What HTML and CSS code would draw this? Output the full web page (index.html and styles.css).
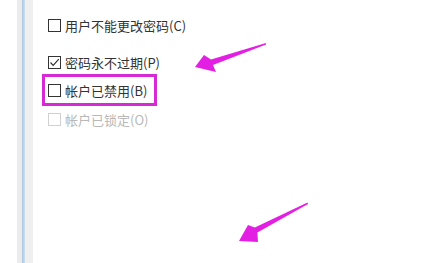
FILE: index.html
```html
<!DOCTYPE html>
<html lang="zh-CN">
<head>
    <meta charset="UTF-8">
    <link rel="stylesheet" href="styles.css">
</head>
<body>
    <div class="page">
        <div class="frame">
            <div class="frame-gray"></div>
            <div class="frame-blue"></div>
            <div class="frame-light"></div>
        </div>
        <div class="options">
            <label class="option first">
                <span class="box"></span>
                <span>用户不能更改密码(C)</span>
            </label>
            <label class="option second">
                <span class="box">
                    <svg width="11" height="11" viewBox="0 0 11 11"><path d="M1.5 5.5 L4.2 8.3 L9.8 2.2" fill="none" stroke="#333" stroke-width="1.2"/></svg>
                </span>
                <span>密码永不过期(P)</span>
            </label>
            <div class="highlight">
                <label class="option">
                    <span class="box"></span>
                    <span>帐户已禁用(B)</span>
                </label>
            </div>
            <label class="option disabled">
                <span class="box"></span>
                <span>帐户已锁定(O)</span>
            </label>
        </div>
        <!-- arrows drawn over the screenshot -->
        <svg class="arrows" width="433" height="263" viewBox="0 0 433 263">
            <polygon points="266,43 211,59.5 204,55 195,67 216,72 213,65 266,44.5" fill="#e31fe3"/>
            <polygon points="307.5,202.5 254.8,227.5 248,225 239,241 258,242 257.4,232.4 308,204" fill="#e31fe3"/>
        </svg>
    </div>
</body>
</html>
```

FILE: styles.css
```css
body {
    margin: 0;
    background: #fff;
}
.page {
    position: relative;
    display: flex;
    width: 433px;
    height: 263px;
    overflow: hidden;
    font-family: "Noto Sans CJK SC", "Liberation Sans", sans-serif;
}
.frame {
    display: flex;
    margin-left: 17px;
    height: 100%;
}
.frame-gray {
    width: 5px;
    background: #ebebeb;
}
.frame-blue {
    width: 3px;
    background: linear-gradient(to right, #a9c6de, #cfe0ee);
}
.frame-light {
    width: 8px;
    background: #efefef;
}
.options {
    display: flex;
    flex-direction: column;
    padding-left: 15px;
    padding-top: 14px;
}
.option {
    display: flex;
    align-items: center;
    gap: 4px;
    height: 22px;
    font-size: 13px;
    color: #333;
}
.option.second {
    margin-top: 15px;
}
.box {
    display: flex;
    align-items: center;
    justify-content: center;
    width: 11px;
    height: 11px;
    border: 1px solid #333;
    background: #fff;
}
.highlight {
    margin-left: -6px;
    margin-top: 1px;
    width: 103px;
    border: 3px solid #d62ad6;
    padding: 2px 3px;
}
.option.disabled {
    margin-top: 2px;
    color: #b8b8b8;
}
.option.disabled .box {
    border-color: #d0d0d0;
}
.arrows {
    position: absolute;
    left: 0;
    top: 0;
}
```
